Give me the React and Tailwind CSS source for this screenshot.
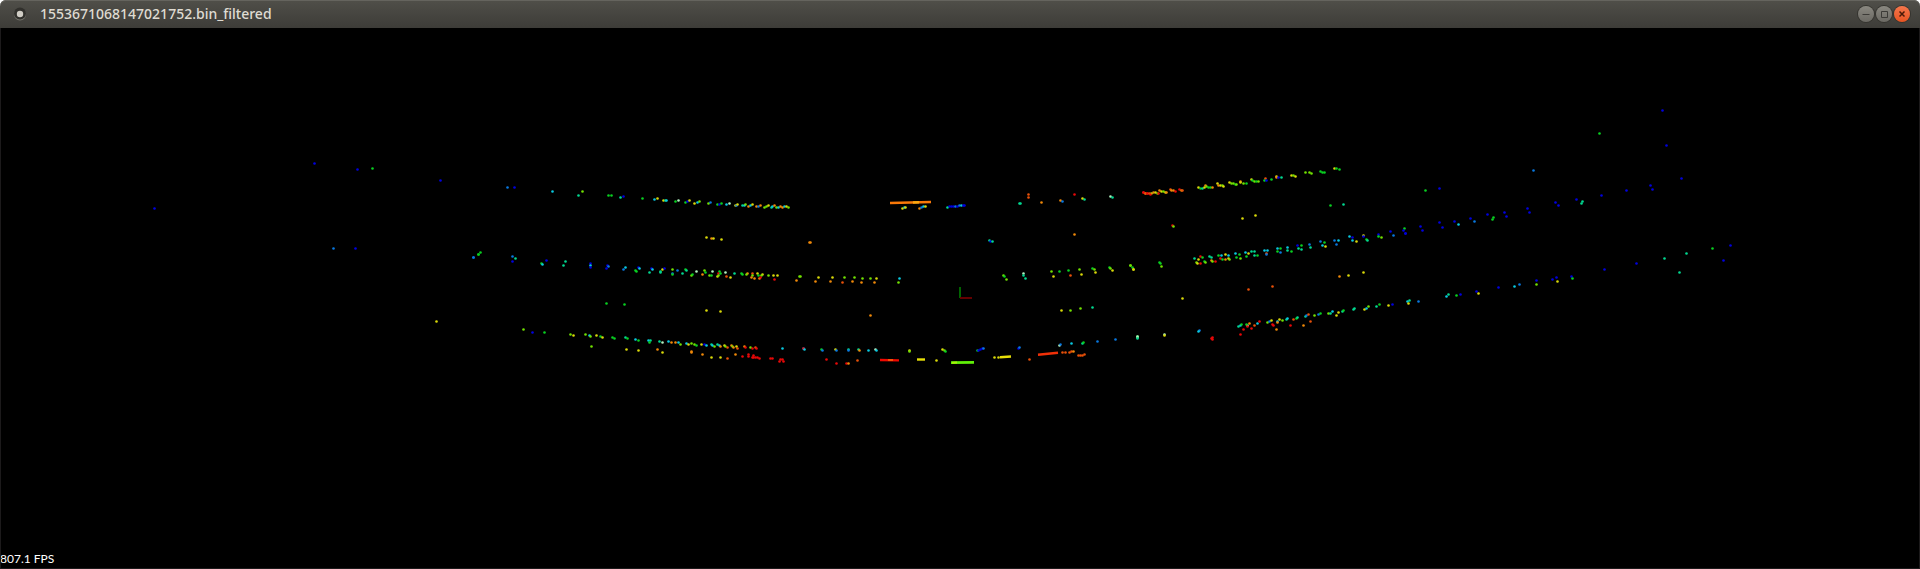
const COLORS = {
  b: '#0000e0',
  s: '#0878e0',
  c: '#08c8e0',
  t: '#00d890',
  g: '#08d020',
  l: '#70e000',
  y: '#d8d808',
  o: '#f08808',
  r: '#e80808',
  v: '#e85008',
  w: '#b0f0c0',
}

// Each cluster is an origin plus "x,y,color" samples at a third of a pixel.
const CLUSTERS = [
  {
    x: 130,
    y: 140,
    samples:
      '552,71,b 682,88,b 728,86,g 930,121,b 73,205,b 611,325,s 675,324,b 1031,352,s 1046,343,g 920,544,y',
  },
  {
    x: 460,
    y: 170,
    samples:
      '141,52,s 164,53,b 278,64,c 355,75,t 366,64,l 446,77,g 454,75,g 481,82,t 490,80,b 546,84,g 583,89,c 591,86,y 609,92,y 615,91,t 620,90,c 647,94,g 655,91,w 677,96,g 683,94,b 688,92,y 704,100,y 711,98,c 717,95,l 744,99,l 750,97,s 772,103,g 778,103,b 784,101,g 800,104,c 807,101,w 825,107,y 828,105,s 833,103,y 846,107,t 852,106,c 857,103,l 866,109,o 871,106,c 876,104,y 890,110,o 896,108,s 902,106,o 914,111,l 920,109,l 926,107,y 933,111,t 938,109,c 942,106,o 949,112,l 955,111,c 961,108,o 967,112,o 973,110,c 978,109,y 984,112,l ' +
      '738,203,y 755,205,o 761,205,y 785,208,y 1049,217,o ' +
      '41,262,s 55,253,g 62,248,g 157,260,s 166,265,t 156,274,b 243,279,g 247,284,c 259,272,b 316,275,t 310,287,t 392,281,b 392,285,c 390,293,b 442,286,b 446,289,s 439,296,b 497,292,c 489,298,s 534,291,b 538,295,c 525,301,g 529,304,g 573,295,b 578,297,c 567,306,t 600,304,t 602,308,t 607,298,y 612,295,b 638,297,l 637,309,s 638,313,g 652,302,s 676,298,g 679,301,t 667,311,t 709,304,w 695,316,l 698,313,g 732,302,l 735,306,g 757,304,w 728,313,o 748,317,l 754,316,g 779,305,g 774,311,r 781,309,g 771,319,y 776,317,l 797,307,w 799,319,v 812,322,y 823,309,t 844,310,g 848,313,g 861,310,o 858,313,l 878,310,v 877,315,l 893,310,y 894,315,g 906,312,y 905,316,l 873,322,o 884,325,o 897,326,o 900,322,r 925,315,l 941,315,y 953,315,y 943,328,r 1019,318,l 1009,331,o ' +
      '439,399,g 494,404,g 740,421,y 782,425,y ' +
      '191,478,l 216,486,b 252,486,g 330,492,l 341,495,y 375,493,l 388,496,c 391,499,l 394,528,l 410,497,y 421,499,g 426,503,y 456,501,g 464,504,g 495,503,t 501,506,g 500,538,y 525,508,c 534,510,g 536,541,y 565,510,c 570,512,t 569,516,g 598,514,t 606,516,w 592,538,o 606,547,y 626,515,c 633,518,o 646,517,o 654,517,c 661,523,l 680,519,c 684,523,y 694,521,l 704,523,l 709,526,g 724,522,y 733,523,b 739,526,c 754,523,t 758,526,c 763,529,l 772,523,t 777,526,c 781,530,o 793,526,y 797,530,l 801,533,v 813,526,o 817,530,l 821,533,o 829,530,y 833,534,v 853,530,o 857,533,r 872,531,l 876,535,r 886,532,v 889,535,r 966,536,c 1031,536,s ' +
      '694,543,o 694,547,o 727,552,o 754,562,y 780,562,y 801,564,v 827,554,o 848,560,r 866,553,r 866,558,r 880,556,r 876,562,r 881,563,r 887,563,r 893,563,r 899,565,r 931,566,r 936,565,r 958,573,r 961,568,r 967,568,r 971,573,r',
  },
  {
    x: 800,
    y: 170,
    samples:
      '307,115,y 312,113,c 317,111,y 358,115,o 364,113,s 370,110,c 376,108,y 441,112,t 448,110,b 454,109,b 460,108,b 466,108,s 472,108,b 478,107,s 484,107,c 490,107,b 493,107,b ' +
      '685,72,v 686,82,v 658,99,t 662,100,t 724,97,o 782,91,o 787,93,s 823,72,r 848,86,y 853,89,t 932,79,w 938,81,t 1031,66,r 1037,69,o 1043,70,r ' +
      '31,217,o 568,210,t 572,213,b 576,215,t 822,194,o ' +
      '0,318,l 54,321,y 46,333,o 97,321,y 91,334,o 132,322,l 126,337,v 164,323,l 157,334,o 187,324,l 183,336,o 210,324,l 229,325,y 223,336,o 299,326,c 294,338,l 611,315,l 614,319,g 618,327,l 669,311,w 671,315,t 676,324,t 754,305,l 761,319,y 778,303,g 806,301,g 811,315,v 838,298,l 844,313,y 878,295,g 882,299,l 886,308,y 928,291,g 932,295,l 936,302,y 991,285,l 996,293,g 999,298,y ' +
      '212,437,o 783,421,y 810,420,l 840,416,l 877,412,t ' +
      '11,536,r 14,539,c 64,538,g 67,541,s 107,538,y 108,541,s 144,539,t 146,542,s 176,539,t 178,542,o 205,541,c 227,539,w 229,542,c 328,541,y 329,544,l 427,539,y 432,541,l 437,543,g 531,542,g 536,541,b 541,539,b 546,536,b 549,535,s 655,536,b 659,531,s 779,525,w 781,522,s 813,521,c 848,519,t 850,516,g 892,513,s 946,509,s 1012,502,w 1013,499,g ' +
      '79,569,r 110,580,r 140,581,r 144,580,o 173,570,v 408,570,y 583,563,y 594,562,y 688,568,v 787,548,v 797,547,v 809,546,v 815,545,v 821,545,o 835,556,v 841,555,v 846,555,v 852,553,v',
  },
  {
    x: 1120,
    y: 150,
    samples:
      '71,126,r 76,129,v 82,130,r 88,131,v 93,129,y 99,127,o 105,128,y 111,129,l 116,131,r 119,122,o 124,125,y 130,125,l 136,127,y 140,128,o 92,134,r 152,117,v 155,121,o 161,121,o 166,123,r 179,118,r 183,121,o 186,122,v ' +
      '236,112,y 241,115,g 247,115,t 252,112,y 256,106,o 259,110,l 265,111,g 271,111,g 276,112,o 292,101,y 295,105,o 300,106,y 306,106,l 311,108,y 328,98,y 334,99,l 340,101,l 345,102,g 350,102,l 361,94,o 362,98,y 370,99,l 380,99,g 393,89,y 396,92,g 403,93,l 409,94,g 416,94,l 436,86,v 434,90,g 440,90,b 453,89,g 468,80,y 469,83,o 475,83,b 484,83,t 513,75,y 519,77,l 526,78,y 557,67,l 568,67,l 575,69,l 601,63,g 606,66,g 613,66,g 643,54,y 649,56,g 659,57,g ' +
      '631,167,g 670,164,t 367,204,y 405,197,y 156,226,r 161,228,l ' +
      '32,346,l 39,357,y 117,337,g 121,339,g 125,349,l 186,445,y 384,418,v 456,408,v 657,380,o 685,375,y 731,368,y ' +
      '223,325,t 234,328,y 229,337,l 232,339,y 240,340,r 242,320,r 247,323,g 252,334,g 256,337,l 269,320,t 274,322,t 274,330,o 278,333,l 285,334,r 295,315,g 304,317,c 302,326,r 307,328,g 316,314,y 325,316,c 316,329,o 325,324,y 328,327,l 346,311,c 357,312,g 349,322,g 360,324,l 377,307,c 385,310,y 379,320,g 393,304,t 403,305,t 404,315,t 411,317,g 432,300,c 442,301,c 438,309,v 439,312,s 471,294,c 482,295,g 472,304,g 481,306,s 502,291,c 503,301,t 514,303,g 531,285,b 544,287,g 534,295,t 545,298,t 567,282,s 572,292,t 600,274,s 614,277,g 607,285,c 616,288,y 644,270,s 655,272,c 650,282,s 687,259,c 698,262,b 696,271,c 708,273,y 731,255,y 731,260,b 738,267,g 741,271,t 775,252,b 776,260,g 784,263,l 811,244,b 819,256,s 852,236,g 851,241,b 856,249,b ' +
      '53,560,w 53,564,t 134,553,w 132,557,y 237,541,s 236,545,c 276,562,r 275,566,r 277,568,r ' +
      '355,528,t 361,526,c 365,523,g 382,525,w 380,522,g 389,519,o 404,525,v 412,520,c 417,515,r 442,518,l 447,514,s 453,511,y 471,513,c 471,517,o 477,508,y 487,510,l 498,507,t 502,504,c 521,507,v 529,504,g 533,501,t 556,500,t 559,496,s 565,493,v 583,496,l 594,494,s 601,490,g 625,491,l 632,489,t 638,485,c 655,487,y 648,496,y 666,484,t 671,480,g 699,478,t 704,475,t 733,478,y 738,474,c 745,469,l 770,469,t 777,464,g 806,467,y 816,463,b 862,455,c 868,450,t 865,459,y 896,453,s ' +
      '361,553,r 370,539,r 381,528,r 394,535,r 457,523,r 461,527,r 470,539,o 512,526,r 551,527,o 572,513,v',
  },
  {
    x: 1400,
    y: 100,
    samples:
      '786,30,b 599,100,g 798,136,b 400,211,s 844,236,b 77,272,g 117,266,b 750,255,b 758,268,b 679,270,b 604,285,b 530,299,b 547,304,t 543,311,t 465,306,b 475,317,b 382,325,b 388,336,b 314,338,b 320,349,b 262,343,b 280,352,g 276,358,g 210,354,b 222,363,s 163,363,b 175,372,c 117,367,b 127,381,b 62,380,b 67,390,b 16,399,b ' +
      '992,437,b 937,444,g 859,460,t 793,475,t 969,482,b 710,490,b 837,517,t 613,508,b 514,528,b 517,534,g 470,531,b 472,544,y 456,538,b 410,542,b 409,554,l 359,552,s 343,559,c 296,562,b 229,573,b 234,579,y 180,582,b 170,587,g 146,583,t 139,589,c',
  },
]

const BARS = [
  [890, 203, 931, 202, '#f87808', 2.6],
  [913, 202.5, 919, 202.2, '#f8a810', 2.4],
  [880, 360, 899, 360.4, '#f00800', 2.4],
  [888, 360, 893, 360, '#f85008', 2],
  [917, 359.5, 925, 359.5, '#e8e008', 2.4],
  [951, 362.7, 974, 362.3, '#60f008', 2.8],
  [952, 362.7, 957, 362.6, '#a8f008', 2],
  [1000, 357.2, 1011, 356.5, '#e8e008', 2.4],
  [1038, 354.8, 1058, 352.8, '#f03008', 2.6],
]

const POINTS = CLUSTERS.flatMap((cluster) =>
  cluster.samples
    .trim()
    .split(/\s+/)
    .map((sample) => {
      const [x, y, color] = sample.split(',')
      return {
        x: Math.floor(cluster.x + Number(x) / 3) + 0.5,
        y: Math.floor(cluster.y + Number(y) / 3) + 0.5,
        color: COLORS[color],
      }
    }),
)

function PointCloud() {
  return (
    <svg
      className="block w-full"
      viewBox="0 28 1920 541"
      role="img"
      aria-label="Point cloud"
    >
      {POINTS.map((p, i) => (
        <circle key={i} cx={p.x} cy={p.y} r="1.3" fill={p.color} />
      ))}
      {BARS.map(([x1, y1, x2, y2, stroke, width], i) => (
        <line key={i} x1={x1} y1={y1} x2={x2} y2={y2} stroke={stroke} strokeWidth={width} />
      ))}
      <rect x="959" y="287" width="2" height="11" fill="#006400" />
      <rect x="960" y="297" width="12" height="2" fill="#640000" />
    </svg>
  )
}

function WindowButton({ label, close, children }) {
  const tone = close
    ? 'from-[#f4764b] to-[#e8531f] text-[#4a1a08]'
    : 'from-[#8a8880] to-[#6b6963] text-[#3c3b37]'
  return (
    <button
      type="button"
      aria-label={label}
      className={`flex size-4 items-center justify-center rounded-full bg-linear-to-b ring-1 ring-[#35342f] ${tone}`}
    >
      <svg className="size-4" viewBox="0 0 16 16" fill="none" stroke="currentColor">
        {children}
      </svg>
    </button>
  )
}

function TitleBar() {
  return (
    <header className="flex h-7 items-center rounded-t-md bg-linear-to-b from-[#504f49] to-[#3d3c38] pr-2.5 pl-3 inset-shadow-[0_1px_0_#65645e]">
      <svg className="size-4 shrink-0" viewBox="0 0 16 16" aria-hidden="true">
        <circle cx="8" cy="8.5" r="6" fill="#75746d" />
        <circle cx="8" cy="7.5" r="6" fill="#31302c" />
        <circle cx="8" cy="8" r="3.2" fill="#d0cdc5" />
      </svg>
      <h1 className="ml-3 flex-1 truncate font-['Noto_Sans',sans-serif] text-sm leading-5 font-medium text-[#dfdbd2]">
        1553671068147021752.bin_filtered
      </h1>
      <div className="flex gap-0.5">
        <WindowButton label="Minimize">
          <path d="M4.5 8.5h7" />
        </WindowButton>
        <WindowButton label="Maximize">
          <path d="M5.5 5.5h6v6h-6z" />
        </WindowButton>
        <WindowButton label="Close" close>
          <path d="M5.5 5.5l5 5M10.5 5.5l-5 5" strokeWidth="1.5" />
        </WindowButton>
      </div>
    </header>
  )
}

export default function App() {
  return (
    <div className="flex min-h-screen flex-col bg-white">
      <TitleBar />
      <main className="relative flex-1 bg-black">
        <PointCloud />
        <p className="absolute bottom-0 left-0 font-[Lato,sans-serif] text-xs leading-5 text-white">
          807.1 FPS
        </p>
        <div className="pointer-events-none absolute inset-0 border-x border-b border-[#1c1a1b]" />
      </main>
    </div>
  )
}
